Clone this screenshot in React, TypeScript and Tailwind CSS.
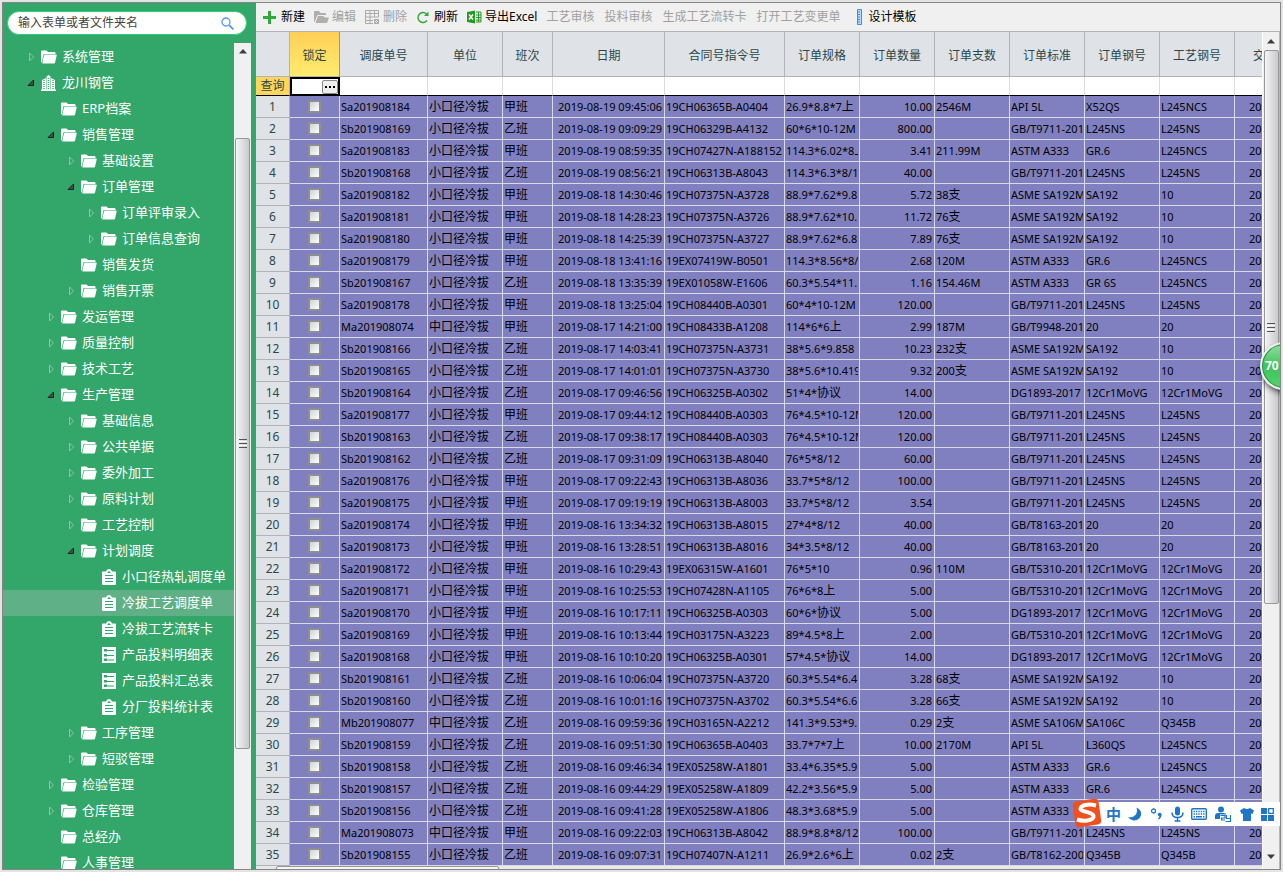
import type { ReactNode } from "react";
import clsx from "clsx";

type IconName = "folder" | "building" | "clipboard" | "list";

interface TreeNode {
  label: string;
  depth: number;
  icon: IconName;
  state?: "open" | "closed";
  selected?: boolean;
}

const tree: TreeNode[] = [
  { label: "系统管理", depth: 0, icon: "folder", state: "closed" },
  { label: "龙川钢管", depth: 0, icon: "building", state: "open" },
  { label: "ERP档案", depth: 1, icon: "folder" },
  { label: "销售管理", depth: 1, icon: "folder", state: "open" },
  { label: "基础设置", depth: 2, icon: "folder", state: "closed" },
  { label: "订单管理", depth: 2, icon: "folder", state: "open" },
  { label: "订单评审录入", depth: 3, icon: "folder", state: "closed" },
  { label: "订单信息查询", depth: 3, icon: "folder", state: "closed" },
  { label: "销售发货", depth: 2, icon: "folder" },
  { label: "销售开票", depth: 2, icon: "folder", state: "closed" },
  { label: "发运管理", depth: 1, icon: "folder", state: "closed" },
  { label: "质量控制", depth: 1, icon: "folder", state: "closed" },
  { label: "技术工艺", depth: 1, icon: "folder", state: "closed" },
  { label: "生产管理", depth: 1, icon: "folder", state: "open" },
  { label: "基础信息", depth: 2, icon: "folder", state: "closed" },
  { label: "公共单据", depth: 2, icon: "folder", state: "closed" },
  { label: "委外加工", depth: 2, icon: "folder", state: "closed" },
  { label: "原料计划", depth: 2, icon: "folder", state: "closed" },
  { label: "工艺控制", depth: 2, icon: "folder", state: "closed" },
  { label: "计划调度", depth: 2, icon: "folder", state: "open" },
  { label: "小口径热轧调度单", depth: 3, icon: "clipboard" },
  { label: "冷拔工艺调度单", depth: 3, icon: "clipboard", selected: true },
  { label: "冷拔工艺流转卡", depth: 3, icon: "clipboard" },
  { label: "产品投料明细表", depth: 3, icon: "list" },
  { label: "产品投料汇总表", depth: 3, icon: "list" },
  { label: "分厂投料统计表", depth: 3, icon: "clipboard" },
  { label: "工序管理", depth: 2, icon: "folder", state: "closed" },
  { label: "短驳管理", depth: 2, icon: "folder", state: "closed" },
  { label: "检验管理", depth: 1, icon: "folder", state: "closed" },
  { label: "仓库管理", depth: 1, icon: "folder", state: "closed" },
  { label: "总经办", depth: 1, icon: "folder" },
  { label: "人事管理", depth: 1, icon: "folder" },
];

const indent = ["pl-6", "pl-11", "pl-16", "pl-21"];

const columns = [
  { title: "调度单号", width: "w-[88px]" },
  { title: "单位", width: "w-[75px]" },
  { title: "班次", width: "w-[50px]" },
  { title: "日期", width: "w-[112px]", right: true },
  { title: "合同号指令号", width: "w-[120px]" },
  { title: "订单规格", width: "w-[75px]" },
  { title: "订单数量", width: "w-[75px]", right: true },
  { title: "订单支数", width: "w-[75px]" },
  { title: "订单标准", width: "w-[75px]" },
  { title: "订单钢号", width: "w-[75px]" },
  { title: "工艺钢号", width: "w-[75px]" },
];

const rows = [
  ["Sa201908184", "小口径冷拔", "甲班", "2019-08-19 09:45:06", "19CH06365B-A0404", "26.9*8.8*7上", "10.00", "2546M", "API 5L", "X52QS", "L245NCS"],
  ["Sb201908169", "小口径冷拔", "乙班", "2019-08-19 09:09:29", "19CH06329B-A4132", "60*6*10-12M", "800.00", "", "GB/T9711-201", "L245NS", "L245NS"],
  ["Sa201908183", "小口径冷拔", "甲班", "2019-08-19 08:59:35", "19CH07427N-A188152", "114.3*6.02*8上", "3.41", "211.99M", "ASTM A333", "GR.6", "L245NCS"],
  ["Sb201908168", "小口径冷拔", "乙班", "2019-08-19 08:56:21", "19CH06313B-A8043", "114.3*6.3*8/1", "40.00", "", "GB/T9711-201", "L245NS", "L245NS"],
  ["Sa201908182", "小口径冷拔", "甲班", "2019-08-18 14:30:46", "19CH07375N-A3728", "88.9*7.62*9.8", "5.72", "38支", "ASME SA192M", "SA192", "10"],
  ["Sa201908181", "小口径冷拔", "甲班", "2019-08-18 14:28:23", "19CH07375N-A3726", "88.9*7.62*10.", "11.72", "76支", "ASME SA192M", "SA192", "10"],
  ["Sa201908180", "小口径冷拔", "甲班", "2019-08-18 14:25:39", "19CH07375N-A3727", "88.9*7.62*6.8", "7.89", "76支", "ASME SA192M", "SA192", "10"],
  ["Sa201908179", "小口径冷拔", "甲班", "2019-08-18 13:41:16", "19EX07419W-B0501", "114.3*8.56*8/", "2.68", "120M", "ASTM A333", "GR.6", "L245NCS"],
  ["Sb201908167", "小口径冷拔", "乙班", "2019-08-18 13:35:39", "19EX01058W-E1606", "60.3*5.54*11.", "1.16", "154.46M", "ASTM A333", "GR 6S", "L245NCS"],
  ["Sa201908178", "小口径冷拔", "甲班", "2019-08-18 13:25:04", "19CH08440B-A0301", "60*4*10-12M", "120.00", "", "GB/T9711-201", "L245NS", "L245NS"],
  ["Ma201908074", "中口径冷拔", "甲班", "2019-08-17 14:21:00", "19CH08433B-A1208", "114*6*6上", "2.99", "187M", "GB/T9948-201", "20", "20"],
  ["Sb201908166", "小口径冷拔", "乙班", "2019-08-17 14:03:41", "19CH07375N-A3731", "38*5.6*9.858", "10.23", "232支", "ASME SA192M", "SA192", "10"],
  ["Sb201908165", "小口径冷拔", "乙班", "2019-08-17 14:01:01", "19CH07375N-A3730", "38*5.6*10.419", "9.32", "200支", "ASME SA192M", "SA192", "10"],
  ["Sb201908164", "小口径冷拔", "乙班", "2019-08-17 09:46:56", "19CH06325B-A0302", "51*4*协议", "14.00", "", "DG1893-2017", "12Cr1MoVG", "12Cr1MoVG"],
  ["Sa201908177", "小口径冷拔", "甲班", "2019-08-17 09:44:12", "19CH08440B-A0303", "76*4.5*10-12M", "120.00", "", "GB/T9711-201", "L245NS", "L245NS"],
  ["Sb201908163", "小口径冷拔", "乙班", "2019-08-17 09:38:17", "19CH08440B-A0303", "76*4.5*10-12M", "120.00", "", "GB/T9711-201", "L245NS", "L245NS"],
  ["Sb201908162", "小口径冷拔", "乙班", "2019-08-17 09:31:09", "19CH06313B-A8040", "76*5*8/12", "60.00", "", "GB/T9711-201", "L245NS", "L245NS"],
  ["Sa201908176", "小口径冷拔", "甲班", "2019-08-17 09:22:43", "19CH06313B-A8036", "33.7*5*8/12", "100.00", "", "GB/T9711-201", "L245NS", "L245NS"],
  ["Sa201908175", "小口径冷拔", "甲班", "2019-08-17 09:19:19", "19CH06313B-A8003", "33.7*5*8/12", "3.54", "", "GB/T9711-201", "L245NS", "L245NS"],
  ["Sa201908174", "小口径冷拔", "甲班", "2019-08-16 13:34:32", "19CH06313B-A8015", "27*4*8/12", "40.00", "", "GB/T8163-201", "20", "20"],
  ["Sa201908173", "小口径冷拔", "甲班", "2019-08-16 13:28:51", "19CH06313B-A8016", "34*3.5*8/12", "40.00", "", "GB/T8163-201", "20", "20"],
  ["Sa201908172", "小口径冷拔", "甲班", "2019-08-16 10:29:43", "19EX06315W-A1601", "76*5*10", "0.96", "110M", "GB/T5310-201", "12Cr1MoVG", "12Cr1MoVG"],
  ["Sa201908171", "小口径冷拔", "甲班", "2019-08-16 10:25:53", "19CH07428N-A1105", "76*6*8上", "5.00", "", "GB/T5310-201", "12Cr1MoVG", "12Cr1MoVG"],
  ["Sa201908170", "小口径冷拔", "甲班", "2019-08-16 10:17:11", "19CH06325B-A0303", "60*6*协议", "5.00", "", "DG1893-2017", "12Cr1MoVG", "12Cr1MoVG"],
  ["Sa201908169", "小口径冷拔", "甲班", "2019-08-16 10:13:44", "19CH03175N-A3223", "89*4.5*8上", "2.00", "", "GB/T5310-201", "12Cr1MoVG", "12Cr1MoVG"],
  ["Sa201908168", "小口径冷拔", "甲班", "2019-08-16 10:10:20", "19CH06325B-A0301", "57*4.5*协议", "14.00", "", "DG1893-2017", "12Cr1MoVG", "12Cr1MoVG"],
  ["Sb201908161", "小口径冷拔", "乙班", "2019-08-16 10:06:04", "19CH07375N-A3720", "60.3*5.54*6.4", "3.28", "68支", "ASME SA192M", "SA192", "10"],
  ["Sb201908160", "小口径冷拔", "乙班", "2019-08-16 10:01:16", "19CH07375N-A3702", "60.3*5.54*6.6", "3.28", "66支", "ASME SA192M", "SA192", "10"],
  ["Mb201908077", "中口径冷拔", "乙班", "2019-08-16 09:59:36", "19CH03165N-A2212", "141.3*9.53*9.", "0.29", "2支", "ASME SA106M", "SA106C", "Q345B"],
  ["Sb201908159", "小口径冷拔", "乙班", "2019-08-16 09:51:30", "19CH06365B-A0403", "33.7*7*7上", "10.00", "2170M", "API 5L", "L360QS", "L245NCS"],
  ["Sb201908158", "小口径冷拔", "乙班", "2019-08-16 09:46:34", "19EX05258W-A1801", "33.4*6.35*5.9", "5.00", "", "ASTM A333", "GR.6", "L245NCS"],
  ["Sb201908157", "小口径冷拔", "乙班", "2019-08-16 09:44:29", "19EX05258W-A1809", "42.2*3.56*5.9", "5.00", "", "ASTM A333", "GR.6", "L245NCS"],
  ["Sb201908156", "小口径冷拔", "乙班", "2019-08-16 09:41:28", "19EX05258W-A1806", "48.3*3.68*5.9", "5.00", "", "ASTM A333", "GR.6", "L245NCS"],
  ["Ma201908073", "中口径冷拔", "甲班", "2019-08-16 09:22:03", "19CH06313B-A8042", "88.9*8.8*8/12", "100.00", "", "GB/T9711-201", "L245NS", "L245NS"],
  ["Sb201908155", "小口径冷拔", "乙班", "2019-08-16 09:07:31", "19CH07407N-A1211", "26.9*2.6*6上", "0.02", "2支", "GB/T8162-200", "Q345B", "Q345B"],
];

function TreeIcon({ name }: { name: IconName }) {
  if (name === "folder") {
    return (
      <svg width="16" height="14" viewBox="0 0 16 14" fill="#fff">
        <path d="M0 1.5Q0 .5 1 .5h4.5l1.500 1.500h6.500q1 0 1 1V4H3.300q-.8 0-1 .8L.9 12.5Q0 12.3 0 11.5z" />
        <path d="M3.900 4.600H15q.9 0 .7.9L14 12.700q-.2.8-1 .8H1.600q-.4 0-.3-.4L2.900 5.400q.2-.8 1-.8z" />
      </svg>
    );
  }
  if (name === "building") {
    return (
      <svg width="16" height="16" viewBox="0 0 16 16">
        <path d="M1 15V5l4-2v12zM5.500 15V1.500L7.500 0l2 1.500V15zM10 15V3l4 2v10zM0 14.500h15V16H0z" fill="#fff" />
        <path d="M3 5v9.500M7.500 3v11.500M12 5v9.500" stroke="#33a66a" strokeWidth="1.400" strokeDasharray="1 1" />
      </svg>
    );
  }
  if (name === "clipboard") {
    return (
      <svg width="16" height="16" viewBox="0 0 16 16">
        <path d="M1 3.500Q1 2.500 2 2.500h3Q5.500 0 8 0t3 2.500h3q1 0 1 1V15q0 1-1 1H2q-1 0-1-1z" fill="#fff" />
        <path d="M6 4h4L8 2z" fill="#33a66a" />
        <path d="M4 6.500h8M4 9.500h8M4 12.500h8" stroke="#33a66a" />
      </svg>
    );
  }
  return (
    <svg width="16" height="16" viewBox="0 0 16 16">
      <path d="M1 0h14v16H1z" fill="#fff" />
      <path d="M3 2h3v2.500H3zM3 7h3v2.500H3zM3 11.500h3V14H3zM6 3h7v1H6zM6 8h7v1H6zM6 12.500h7v1H6z" fill="#33a66a" />
    </svg>
  );
}

function Arrow({ state }: { state?: "open" | "closed" }) {
  return (
    <svg width="9" height="10" viewBox="0 0 9 10" className="shrink-0">
      {state === "open" && <path d="M6.500 2v5.500H1z" fill="#4c4c4c" stroke="#222" />}
      {state === "closed" && <path d="M2.500 1v8L6.500 5z" fill="none" stroke="#9bbfa9" />}
    </svg>
  );
}

function Grip() {
  return (
    <div className="flex flex-col gap-px">
      <i className="h-px w-2 bg-[#555]" />
      <i className="h-px w-2 bg-white" />
      <i className="h-px w-2 bg-[#555]" />
      <i className="h-px w-2 bg-white" />
      <i className="h-px w-2 bg-[#555]" />
    </div>
  );
}

function ScrollArrow({ down }: { down?: boolean }) {
  return (
    <svg width="8" height="5" viewBox="0 0 8 5" className={clsx(down && "rotate-180")}>
      <path d="M4 0l4 4.500H0z" fill="#3c3c3c" />
    </svg>
  );
}

function Sidebar() {
  return (
    <aside className="flex w-[253px] shrink-0 flex-col bg-[#33a66a]">
      <div className="px-1 pt-2">
        <label className="flex h-6 w-60 items-center rounded-full border border-[#2fd072] bg-white pr-3 pl-2.5">
          <input
            aria-label="搜索"
            placeholder="输入表单或者文件夹名"
            className="min-w-0 flex-1 text-xs text-gray-700 outline-none placeholder:text-[#444]"
          />
          <svg width="13" height="13" viewBox="0 0 13 13" fill="none" stroke="#5a9be8">
            <circle cx="5" cy="5" r="4" strokeWidth="1.300" />
            <path d="M8 8l4.500 4.500" strokeWidth="1.800" />
          </svg>
        </label>
      </div>
      <div className="mt-2 flex min-h-0 flex-1">
        <nav className="min-w-0 flex-1 overflow-hidden pt-px">
          {tree.map((node) => (
            <a
              key={node.label}
              href="#"
              className={clsx(
                "flex h-[26px] items-center text-[13px] whitespace-nowrap text-white",
                indent[node.depth],
                node.selected && "bg-[#5fb086]"
              )}
            >
              <Arrow state={node.state} />
              <span className="mx-[5px] shrink-0">
                <TreeIcon name={node.icon} />
              </span>
              {node.label}
            </a>
          ))}
        </nav>
        <div className="mr-[5px] flex w-[17px] flex-col items-center bg-[#f0f0f0]">
          <div className="flex h-[95px] justify-center pt-1.5">
            <ScrollArrow />
          </div>
          <div className="flex h-[74%] w-[15px] items-center justify-center rounded-xs border border-[#979797] bg-linear-to-r from-[#f5f5f5] to-[#c9c9ce]">
            <Grip />
          </div>
        </div>
      </div>
    </aside>
  );
}

function ToolButton({ icon, children, disabled }: { icon?: ReactNode; children: ReactNode; disabled?: boolean }) {
  return (
    <button
      disabled={disabled}
      className={clsx("flex items-center whitespace-nowrap", icon ? "gap-[3px]" : "px-px", disabled ? "text-[#a0a0a0]" : "text-black")}
    >
      {icon}
      {children}
    </button>
  );
}

function Toolbar() {
  return (
    <div className="flex h-7 shrink-0 items-center gap-2 overflow-hidden bg-[#f0f0f0] pl-1.5 text-xs">
      <ToolButton
        icon={
          <svg width="16" height="16" viewBox="0 0 16 16">
            <path d="M6 2h3v5h5v3H9v5H6v-5H1V7h5z" fill="#2fa83c" />
          </svg>
        }
      >
        新建
      </ToolButton>
      <ToolButton
        disabled
        icon={
          <svg width="16" height="16" viewBox="0 0 16 16" fill="#aeaeae">
            <path d="M1 3q0-1 1-1h4l1.500 2H12q1 0 1 1v1H4.500L1.500 13Q1 13 1 12z" />
            <path d="M5 7h5l2 1.500h4L14 14H2.500z" />
          </svg>
        }
      >
        编辑
      </ToolButton>
      <ToolButton
        disabled
        icon={
          <svg width="16" height="16" viewBox="0 0 16 16" fill="none" stroke="#aaa">
            <path d="M9 14.500H1.500v-13h13V8M1.500 4.500h13M1.500 8h13M1.500 11.500H9M6 1.500v13M10.500 1.500V8" />
            <path d="M10.500 10.500h4v4h-4zM10.500 10.500l4 4M14.500 10.500l-4 4" />
          </svg>
        }
      >
        删除
      </ToolButton>
      <ToolButton
        icon={
          <svg width="16" height="16" viewBox="0 0 16 16" fill="none" stroke="#2fa83c" strokeWidth="1.400">
            <path d="M11.500 5A5 5 0 1 0 12 11.500" />
            <path d="M13.500 2.500v4.500H9z" fill="#2fa83c" stroke="none" />
          </svg>
        }
      >
        刷新
      </ToolButton>
      <ToolButton
        icon={
          <svg width="16" height="16" viewBox="0 0 16 16">
            <path d="M1 3l8-1.500v13L1 13z" fill="#259b24" />
            <path d="M10 3h5v10h-5" fill="none" stroke="#259b24" />
            <path d="M10 6h5M10 8.500h5M10 11h5M12.500 3v10" stroke="#259b24" />
            <path d="M3 5.500l4 5M7 5.500l-4 5" stroke="#fff" strokeWidth="1.500" />
          </svg>
        }
      >
        导出Excel
      </ToolButton>
      <ToolButton disabled>工艺审核</ToolButton>
      <ToolButton disabled>投料审核</ToolButton>
      <ToolButton disabled>生成工艺流转卡</ToolButton>
      <ToolButton disabled>打开工艺变更单</ToolButton>
      <ToolButton
        icon={
          <svg width="16" height="16" viewBox="0 0 16 16">
            <path d="M7.500.5h4v15h-4z" fill="#b9dafa" stroke="#3f8fe0" />
            <path d="M8 3h2M8 5.500h2M8 8h2M8 10.500h2M8 13h2" stroke="#3f8fe0" />
          </svg>
        }
      >
        设计模板
      </ToolButton>
    </div>
  );
}

// Chinese characters are set one size above the latin text
function CellText({ text }: { text: string }) {
  const [, latin, han] = text.match(/^([\x20-\x7e]*)(.*)$/) ?? [];
  return (
    <>
      {latin}
      {han && <span className="text-xs leading-none">{han}</span>}
    </>
  );
}

const headCell = "border-r border-b border-[#b0b4b9] bg-[#dfe2e7] font-normal text-[#2b4847]";

function Grid() {
  return (
    <table className="w-full table-fixed border-separate border-spacing-0 text-[11px] leading-4 whitespace-nowrap">
      <colgroup>
        <col className="w-[34px]" />
        <col className="w-[50px]" />
        {columns.map((c) => (
          <col key={c.title} className={c.width} />
        ))}
        <col />
      </colgroup>
      <thead>
        <tr className="h-[45px] text-xs">
          <th className={clsx(headCell, "p-0")} />
          <th className="border-r border-b border-r-[#c8922c] border-b-[#b0b4b9] bg-linear-to-b from-[#ffcf57] to-[#ffec6e] p-0 pt-1 font-normal text-[#2b4847]">
            锁定
          </th>
          {columns.map((c) => (
            <th key={c.title} className={clsx(headCell, "p-0 pt-1")}>
              {c.title}
            </th>
          ))}
          <th className="overflow-hidden border-b border-[#b0b4b9] bg-[#dfe2e7] p-0 pt-1 pl-[18px] text-left font-normal text-[#2b4847]">交</th>
        </tr>
        <tr className="h-[19px] text-xs">
          <th className="border-r border-b border-black border-r-[#b0b4b9] bg-[#ffd65c] p-0 font-normal text-[#2b4847]">查询</th>
          <td className="border-2 border-black bg-white p-0">
            <div className="flex justify-end">
              <button aria-label="选择" className="flex h-3.5 w-4 items-center justify-center gap-0.5 rounded-xs border border-[#888] bg-[#eee]">
                <i className="size-0.5 bg-black" />
                <i className="size-0.5 bg-black" />
                <i className="size-0.5 bg-black" />
              </button>
            </div>
          </td>
          {columns.map((c) => (
            <td key={c.title} className="border-r border-b border-r-[#dcdcdc] border-b-black bg-white p-0" />
          ))}
          <td className="border-b border-black bg-white p-0" />
        </tr>
      </thead>
      <tbody>
        {rows.map((row, i) => (
          <tr key={row[0]} className="h-[22px] bg-[#8080c0] text-black">
            <th className={clsx(headCell, "p-0 text-xs")}>{i + 1}</th>
            <td className="border-r border-b border-[#d8dae6] p-0">
              <input
                type="checkbox"
                aria-label={row[0]}
                className="mx-auto block size-[13px] appearance-none border-2 border-[#8f8f8f] bg-linear-to-br from-[#d0d2d8] to-white"
              />
            </td>
            {columns.map((c, j) => (
              <td key={c.title} className="border-r border-b border-[#d8dae6] p-0">
                <div className={clsx("ml-px overflow-hidden", c.right ? "mr-0.5 text-right" : "mr-px")}>
                  <CellText text={row[j]} />
                </div>
              </td>
            ))}
            <td className="overflow-hidden border-b border-[#d8dae6] p-0 pl-3.5">20</td>
          </tr>
        ))}
      </tbody>
    </table>
  );
}

function ImeBar() {
  return (
    <div className="absolute right-0 bottom-[43px] flex h-6 w-[194px] items-center bg-white pr-1.5 pl-4 text-[#1f76c6]">
      <svg width="30" height="30" viewBox="0 0 30 30" className="absolute -top-1 -left-3.5">
        <rect x="2" y="2" width="26" height="26" rx="4" fill="#f0501e" transform="rotate(-8 15 15)" />
        <path d="M24 7.500C16 5.500 9 7 8.500 10.500S22 14 21.500 18.500 11 23.500 5 21.500" fill="none" stroke="#fff" strokeWidth="4" />
      </svg>
      <div className="flex flex-1 items-center justify-between pl-1">
        <span className="text-[15px] leading-none font-bold">中</span>
        <svg width="14" height="14" viewBox="0 0 14 14" fill="currentColor">
          <path d="M8.500.5Q14 3 13 8.500 11 13.500 5.500 13.500 2 13 0 10 5 11 8 7.500 10 4 8.500.5z" />
        </svg>
        <svg width="14" height="14" viewBox="0 0 14 14" fill="currentColor">
          <circle cx="3.500" cy="4" r="2" fill="none" stroke="currentColor" strokeWidth="1.300" />
          <path d="M8 6.500q2-1.500 3.500.3.800 3-2.500 5.700l-1-.8q1.500-1.200 1.300-2.700Q7 8.500 8 6.500z" />
        </svg>
        <svg width="13" height="16" viewBox="0 0 13 16" fill="none" stroke="currentColor" strokeWidth="1.500">
          <rect x="4" y=".5" width="5" height="9" rx="2.500" fill="currentColor" stroke="none" />
          <path d="M1 6.500q0 5 5.500 5t5.500-5M6.500 11.500V15M3.500 15h6" />
        </svg>
        <svg width="16" height="12" viewBox="0 0 16 12" fill="none" stroke="currentColor">
          <rect x=".7" y=".7" width="14.600" height="10.600" rx="1" strokeWidth="1.400" />
          <path d="M2.500 3.500h11M2.500 6h11" strokeWidth="1.400" strokeDasharray="1.400 1" />
          <path d="M2.500 8.700H4M5 8.700h6M12 8.700h1.500" strokeWidth="1.400" />
        </svg>
        <svg width="18" height="16" viewBox="0 0 18 16" fill="currentColor">
          <circle cx="7" cy="3.500" r="3" />
          <path d="M1 13V10q0-3 3-3h6q2 0 2.500 1.500H6V13z" />
          <path d="M6.500 9.500h4.500v2.500H7.500V14H11M12.500 9v3.500H17M16.500 9v6.500h-5" fill="none" stroke="currentColor" strokeWidth="1.200" />
        </svg>
        <svg width="14" height="13" viewBox="0 0 14 13" fill="currentColor">
          <path d="M4 0q3 2 6 0l4 2.500-1.500 3.500-1.500-.6V13H3V5.400L1.500 6 0 2.500z" />
        </svg>
        <svg width="13" height="13" viewBox="0 0 13 13" fill="currentColor">
          <path d="M0 0h6v6H0zM0 7h6v6H0zM7 7h6v6H7z" />
          <path d="M7.700.7h4.600v4.600H7.700z" fill="none" stroke="currentColor" strokeWidth="1.300" />
        </svg>
      </div>
    </div>
  );
}

export default function App() {
  return (
    <div className="flex h-screen overflow-hidden border-2 border-[#e4e4e4] bg-[#f0f0f0] font-['Noto_Sans','Noto_Sans_CJK_SC',sans-serif]">
      <div className="relative flex min-w-0 flex-1 overflow-hidden border border-[#858585]">
        <Sidebar />
        <main className="flex min-w-0 flex-1 flex-col">
          <Toolbar />
          <div className="flex min-h-0 flex-1 overflow-hidden border-t border-[#b0b4b9]">
            <div className="flex min-w-0 flex-1 flex-col overflow-hidden">
              <Grid />
              <div className="min-h-1 flex-1 overflow-hidden bg-[#e8e8e8] pl-5">
                <div className="h-4 w-[223px] rounded-xs border border-[#979797] bg-[#f5f5f5]" />
              </div>
            </div>
            <div className="flex w-[17px] flex-col items-center border-l border-white bg-[#f0f0f0] pb-2.5">
              <div className="flex h-[18px] justify-center pt-[7px]">
                <ScrollArrow />
              </div>
              <div className="flex h-[67%] w-[15px] items-center justify-center rounded-xs border border-[#979797] bg-linear-to-r from-[#f5f5f5] to-[#c9c9ce]">
                <Grip />
              </div>
              <div className="flex-1" />
              <ScrollArrow down />
            </div>
            <div className="w-px bg-[#b8b8b8]" />
          </div>
        </main>
        <ImeBar />
        <div className="absolute top-[339px] -right-7 flex size-12 items-center rounded-full border-2 border-[#eee] bg-linear-to-b from-[#8be09c] via-[#3cc45a] to-[#4fd46c] pl-[3px] text-xs font-bold text-white inset-ring inset-ring-[#1f8a48] shadow-md shadow-black/50">
          70
        </div>
      </div>
    </div>
  );
}
